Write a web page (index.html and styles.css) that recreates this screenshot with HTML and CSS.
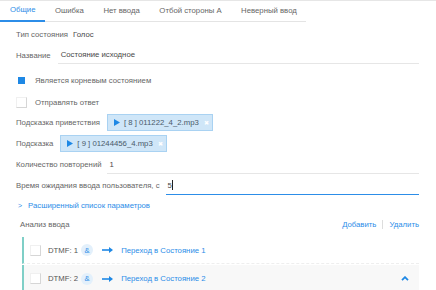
FILE: index.html
```html
<!DOCTYPE html>
<html lang="ru">
<head>
<meta charset="utf-8">
<link rel="stylesheet" href="styles.css">
</head>
<body>
<div class="tabs">
  <div class="tab active">Общие</div>
  <div class="tab">Ошибка</div>
  <div class="tab">Нет ввода</div>
  <div class="tab">Отбой стороны A</div>
  <div class="tab">Неверный ввод</div>
</div>
<div class="form">
  <div class="row r-type"><span class="label">Тип состояния</span><span class="value">Голос</span></div>
  <div class="row r-name"><span class="label">Название</span><div class="input"><span class="value">Состояние исходное</span></div></div>
  <div class="row r-check1"><span class="cb checked"><span class="cb-in"></span></span><span class="label">Является корневым состоянием</span></div>
  <div class="row r-check2"><span class="cb"></span><span class="label">Отправлять ответ</span></div>
  <div class="row r-chip"><span class="label">Подсказка приветствия</span>
    <span class="chip"><svg class="play" width="6" height="7" viewBox="0 0 6 7"><path d="M0 0 L6 3.5 L0 7 Z" fill="#1e88e5"/></svg><span class="chip-text">[ 8 ] 011222_4_2.mp3</span><span class="chip-x">✖</span></span>
  </div>
  <div class="row r-chip"><span class="label">Подсказка</span>
    <span class="chip"><svg class="play" width="6" height="7" viewBox="0 0 6 7"><path d="M0 0 L6 3.5 L0 7 Z" fill="#1e88e5"/></svg><span class="chip-text">[ 9 ] 01244456_4.mp3</span><span class="chip-x">✖</span></span>
  </div>
  <div class="row r-count"><span class="label">Количество повторений</span><div class="input"><span class="value">1</span></div></div>
  <div class="row r-time"><span class="label">Время ожидания ввода пользователя, с</span><div class="input focused"><span class="value">5</span><span class="caret"></span></div></div>
  <div class="row r-adv"><span class="chev">&gt;</span><span class="link">Расширенный список параметров</span></div>
</div>
<div class="analysis">
  <div class="an-head"><span class="label">Анализ ввода</span><span class="actions"><span class="link">Добавить</span><span class="sep"></span><span class="link">Удалить</span></span></div>
  <div class="list">
    <div class="item">
      <span class="cb"></span><span class="dtmf">DTMF: 1</span><span class="amp">&amp;</span>
      <svg class="arrow" width="11" height="6" viewBox="0 0 11 6"><path d="M0 3 H8" stroke="#1e88e5" stroke-width="1.6"/><path d="M7 0 L11 3 L7 6 Z" fill="#1e88e5"/></svg>
      <span class="link">Переход в Состояние 1</span>
    </div>
    <div class="item alt">
      <span class="cb"></span><span class="dtmf">DTMF: 2</span><span class="amp">&amp;</span>
      <svg class="arrow" width="11" height="6" viewBox="0 0 11 6"><path d="M0 3 H8" stroke="#1e88e5" stroke-width="1.6"/><path d="M7 0 L11 3 L7 6 Z" fill="#1e88e5"/></svg>
      <span class="link">Переход в Состояние 2</span>
      <svg class="up" width="8" height="5" viewBox="0 0 8 5"><path d="M1 4.2 L4 1.2 L7 4.2" stroke="#1e88e5" stroke-width="1.8" fill="none"/></svg>
    </div>
  </div>
</div>
</body>
</html>
```
FILE: styles.css
```css
* { box-sizing: border-box; }
html, body { margin: 0; padding: 0; background: #fff; }
body {
  font-family: "Liberation Sans", Arial, sans-serif;
  font-size: 7.75px;
  color: #555;
  width: 436px;
  height: 290px;
  overflow: hidden;
}
.tabs {
  display: flex;
  border-top: 1px solid #e6e6e6;
  width: 436px;
}
.tab {
  height: 21px;
  line-height: 19px;
  padding: 0 9.5px 0 10px;
  color: #666;
  border-bottom: 1px solid #e4e4e4;
}
.tab.active {
  color: #2c8de8;
  border-bottom: 2px solid #2c8de8;
  line-height: 18px;
}
.form {
  padding: 2px 17px 0 16px;
  display: flex;
  flex-direction: column;
}
.row { display: flex; align-items: center; }
.label { color: #666; white-space: nowrap; }
.value { color: #484848; }
.r-type { height: 20px; gap: 5px; }
.r-name { height: 22px; gap: 7px; }
.input {
  flex: 1;
  height: 18px;
  border-bottom: 1px solid #e6e6e6;
  display: flex;
  align-items: center;
  padding-left: 3px;
}
.input.focused { border-bottom: 1.5px solid #2c8de8; padding-left: 2px; }
.caret { width: 1px; height: 10px; background: #222; }
.r-check1 { height: 20px; margin-top: 4px; gap: 8px; }
.r-check2 { height: 20px; margin-top: 2px; gap: 8px; }
.cb {
  width: 11px;
  height: 11px;
  border: 1px solid #f0f0f0;
  border-right-color: #d6d6d6;
  border-bottom-color: #d6d6d6;
  background: #fff;
  display: inline-flex;
  align-items: center;
  justify-content: center;
  flex: none;
}
.cb.checked { border-color: #fff; }
.cb-in { width: 7px; height: 7px; background: #1e88e5; }
.r-chip { height: 21px; gap: 7px; }
.chip {
  height: 17px;
  display: inline-flex;
  align-items: center;
  background: #cfe6f8;
  border: 1px solid #a9d2f2;
  padding: 0 3px 0 6px;
  gap: 4px;
}
.play { flex: none; }
.chip-text { color: #4a5a6a; }
.chip-x { color: #fff; font-size: 6px; margin-left: 1px; }
.r-count { height: 21px; gap: 5px; }
.r-time { height: 21px; gap: 6px; }
.r-adv { height: 19px; gap: 6px; padding-left: 2px; }
.chev { color: #2c8de8; font-size: 7px; }
.link { color: #2c8de8; }
.analysis { padding: 0 17px 0 20px; }
.an-head {
  height: 18px;
  display: flex;
  align-items: center;
  justify-content: space-between;
}
.actions { display: flex; align-items: center; gap: 6px; }
.sep { width: 1px; height: 9px; background: #ddd; }
.list { margin-top: 4px; margin-left: 2px; }
.item {
  height: 27px;
  display: flex;
  align-items: center;
  border-left: 2px solid #7fcfc7;
  border-bottom: 1px dashed #eeeeee;
  padding-left: 6px;
  margin-bottom: 1px;
}
.item.alt { background: #f8f8f8; border-bottom: none; }
.item .cb { margin-right: 7px; }
.dtmf { color: #555; margin-right: 3px; }
.amp {
  width: 12px; height: 12px;
  border-radius: 50%;
  background: #e3f0fb;
  color: #2c8de8;
  display: inline-flex;
  align-items: center;
  justify-content: center;
  margin-right: 9px;
}
.arrow { margin-right: 8px; }
.up { margin-left: auto; margin-right: 10px; }
```
